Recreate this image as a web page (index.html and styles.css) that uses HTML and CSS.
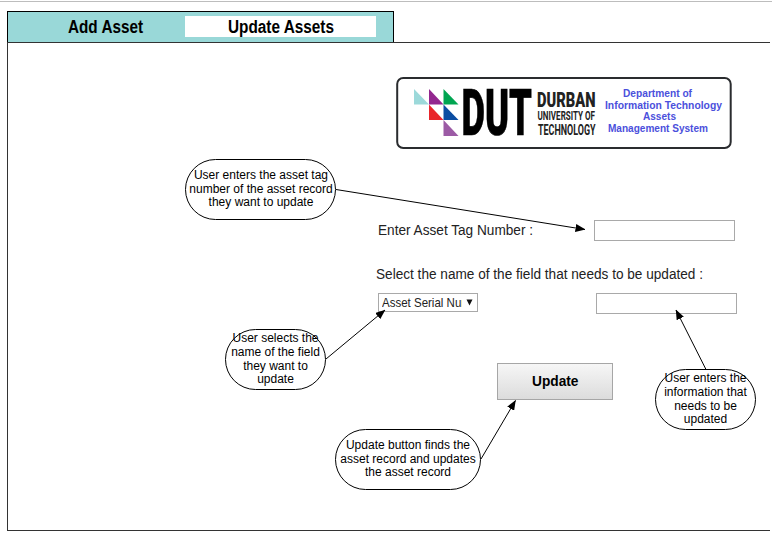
FILE: index.html
```html
<!DOCTYPE html>
<html lang="en">
<head>
<meta charset="utf-8">
<title>Update Assets</title>
<link rel="stylesheet" href="styles.css">
</head>
<body>
<div class="page">
  <nav class="tabs">
    <a class="tab"><svg class="label" width="76" height="24"><text x="0" y="18" textLength="75" lengthAdjust="spacingAndGlyphs">Add Asset</text></svg></a>
    <a class="tab active"><svg class="label" width="107" height="24"><text x="0" y="18" textLength="106" lengthAdjust="spacingAndGlyphs">Update Assets</text></svg></a>
  </nav>
  <main class="panel">
    <svg class="brand" width="336" height="73" viewBox="396 77 336 73">
      <rect x="397.2" y="78" width="333.5" height="70" rx="6" fill="#fff" stroke="#2a2c2f" stroke-width="2"/>
      <path fill="#9cd9da" d="M414 89V104.500H429Z"/>
      <path fill="#93278f" d="M429 89V104.500H443.500Z"/>
      <path fill="#00a551" d="M443.500 89V104.500H458.500Z"/>
      <path fill="#e8252b" d="M429 104.500V120H443.500Z"/>
      <path fill="#0b4da2" d="M443.500 104.500V120H458.500Z"/>
      <path fill="#9c5ba5" d="M443.500 120V136H458.500Z"/>
      <text class="mark" x="461.500" y="134.500" textLength="70.500" lengthAdjust="spacingAndGlyphs">DUT</text>
      <g class="name">
        <text class="name-one" x="537" y="106.700" textLength="58.500" lengthAdjust="spacingAndGlyphs">DURBAN</text>
        <text class="name-two" x="537.500" y="120" textLength="57.500" lengthAdjust="spacingAndGlyphs">UNIVERSITY OF</text>
        <text class="name-three" x="538" y="135" textLength="57.500" lengthAdjust="spacingAndGlyphs">TECHNOLOGY</text>
      </g>
      <g class="department">
        <text x="623" y="97" textLength="69" lengthAdjust="spacingAndGlyphs">Department of</text>
        <text x="605" y="108.500" textLength="117" lengthAdjust="spacingAndGlyphs">Information Technology</text>
        <text x="643" y="120.300" textLength="33" lengthAdjust="spacingAndGlyphs">Assets</text>
        <text x="608" y="131.800" textLength="100" lengthAdjust="spacingAndGlyphs">Management System</text>
      </g>
    </svg>
    <form class="form">
      <div class="row tag-row">
        <svg class="prompt" width="156" height="21"><text x="0" y="14.500" textLength="155" lengthAdjust="spacingAndGlyphs">Enter Asset Tag Number :</text></svg>
        <input class="field" aria-label="Asset tag number">
      </div>
      <svg class="prompt question" width="328" height="21"><text x="0" y="14.500" textLength="327" lengthAdjust="spacingAndGlyphs">Select the name of the field that needs to be updated :</text></svg>
      <div class="row value-row">
        <div class="select">
          <svg width="80" height="17"><text x="0" y="13" textLength="105.500" lengthAdjust="spacingAndGlyphs">Asset Serial Number</text></svg>
          <svg class="caret" width="7" height="7"><path d="M0.500 0.500H6.500L3.500 6.500Z"/></svg>
        </div>
        <input class="field" aria-label="New value">
      </div>
      <button class="submit" type="button"><svg class="submit-label" width="47" height="22"><text x="0" y="15" textLength="46.500" lengthAdjust="spacingAndGlyphs">Update</text></svg></button>
    </form>
  </main>
</div>
<svg class="arrows" width="772" height="551">
  <defs><marker id="head" markerUnits="userSpaceOnUse" markerWidth="10" markerHeight="8" refX="9.500" refY="4" orient="auto"><path d="M0 0L10 4L0 8Z"/></marker></defs>
  <g stroke="#000">
    <path marker-end="url(#head)" d="M336 189.500L585 229.500"/>
    <path marker-end="url(#head)" d="M326 359L385 310"/>
    <path marker-end="url(#head)" d="M706 369.500L676 310"/>
    <path marker-end="url(#head)" d="M481 459L515.500 400.500"/>
  </g>
</svg>
<div class="callout callout-tag">User enters the asset tag<br>number of the asset record<br>they want to update</div>
<div class="callout callout-name">User selects the<br>name of the field<br>they want to<br>update</div>
<div class="callout callout-value">User enters the<br>information that<br>needs to be<br>updated</div>
<div class="callout callout-submit">Update button finds the<br>asset record and updates<br>the asset record</div>
</body>
</html>
```
FILE: styles.css
```css
* { box-sizing: border-box; }
body {
  margin: 0;
  width: 772px;
  height: 551px;
  overflow: hidden;
  position: relative;
  background: #fff;
  font-family: "Liberation Sans", Arial, sans-serif;
}
svg { display: block; }
.page {
  border-top: 1px solid #bdbdbd;
  margin-top: 1px;
  padding: 9px 2px 0 7px;
}
.tabs {
  width: 387px;
  height: 31px;
  border: 1px solid #000;
  border-bottom: 0;
  background: #99d8d8;
  display: flex;
  padding: 4px 17px 0 0;
}
.tab {
  width: 177px;
  height: 21px;
  display: flex;
  padding-left: 60px;
}
.tab.active {
  width: 191px;
  padding-left: 43px;
  background: #fff;
}
.label {
  flex: none;
  margin-top: -1px;
  overflow: visible;
  font-size: 17.500px;
  font-weight: bold;
}
.panel {
  height: 489px;
  border: solid #333;
  border-width: 1px 0 1px 1px;
  padding: 34px 0 0 388px;
}
.brand { overflow: visible; }
.mark {
  font: 900 64px Roboto, sans-serif;
  stroke: #000;
  stroke-width: 0.6px;
}
.name { fill: #222; font-family: Roboto, sans-serif; font-weight: 900; }
.name-one { font-size: 20.500px; }
.name-two { font-size: 12.200px; font-weight: 700; }
.name-three { font-size: 15px; font-weight: 700; }
.department { fill: #4b50dc; font-size: 10.300px; font-weight: bold; }
.form { padding-top: 70px; margin-left: -20px; }
.row { display: flex; }
.tag-row { padding-left: 2px; gap: 60px; }
.prompt { font-size: 15.500px; fill: #222; overflow: visible; }
.question { margin-top: 23px; }
.field {
  width: 141px;
  height: 21px;
  border: 1px solid #a9a9a9;
  background: #fff;
  padding: 0;
}
.value-row { padding-left: 2px; margin-top: 8px; gap: 118px; }
.select {
  width: 100px;
  height: 19px;
  border: 1px solid #a9a9a9;
  padding-left: 3px;
  display: flex;
  gap: 4px;
  font-size: 13.500px;
  fill: #222;
}
.select svg { flex: none; }
.select .caret { margin-top: 5px; fill: #111; }
.submit {
  width: 116px;
  height: 37px;
  margin: 49px 0 0 121px;
  padding: 0;
  display: flex;
  align-items: center;
  justify-content: center;
  border: 1px solid #a6a6a6;
  background: linear-gradient(#f6f6f6, #dcdcdc);
  font: bold 15.500px "Liberation Sans", Arial, sans-serif;
}
.submit-label { overflow: visible; }
.arrows { position: absolute; left: 0; top: 0; }
.callout {
  position: absolute;
  height: 61px;
  border: 1px solid #000;
  border-radius: 31px;
  display: grid;
  place-content: center;
  text-align: center;
  white-space: nowrap;
  font-size: 12px;
  line-height: 13.600px;
}
.callout-tag { left: 185px; top: 159px; width: 151px; padding-left: 1px; }
.callout-name { left: 225px; top: 329px; width: 101px; }
.callout-value { left: 655px; top: 369px; width: 101px; }
.callout-submit { left: 335px; top: 429px; width: 146px; }
```
